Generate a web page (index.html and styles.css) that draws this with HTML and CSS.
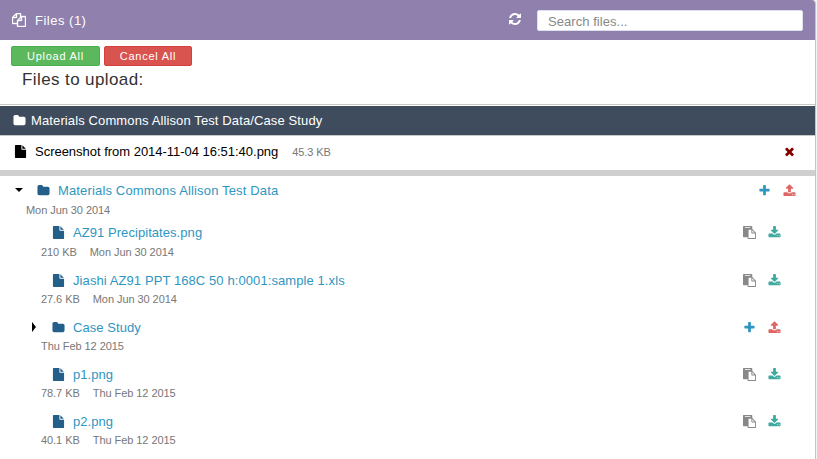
FILE: index.html
```
<!DOCTYPE html>
<html lang="en">
<head>
<meta charset="utf-8">
<title>Files</title>
<link rel="stylesheet" href="styles.css">
</head>
<body>
<svg class="sprite" aria-hidden="true">
<symbol id="folder" viewBox="0 0 1792 1792"><path d="M1728 608v704q0 92-66 158t-158 66h-1216q-92 0-158-66t-66-158v-960q0-92 66-158t158-66h320q92 0 158 66t66 158v32h672q92 0 158 66t66 158z"/></symbol>
<symbol id="file" viewBox="0 0 1792 1792"><path d="M1152 512v-472q22 14 36 28l408 408q14 14 28 36h-472zm-128 32q0 40 28 68t68 28h544v1056q0 40-28 68t-68 28h-1344q-40 0-68-28t-28-68v-1600q0-40 28-68t68-28h800v544z"/></symbol>
<symbol id="plus" viewBox="0 0 1792 1792"><path d="M1600 736v192q0 40-28 68t-68 28h-416v416q0 40-28 68t-68 28h-192q-40 0-68-28t-28-68v-416h-416q-40 0-68-28t-28-68v-192q0-40 28-68t68-28h416v-416q0-40 28-68t68-28h192q40 0 68 28t28 68v416h416q40 0 68 28t28 68z"/></symbol>
<symbol id="times" viewBox="0 0 1792 1792"><path d="M1490 1322q0 40-28 68l-136 136q-28 28-68 28t-68-28l-294-294-294 294q-28 28-68 28t-68-28l-136-136q-28-28-28-68t28-68l294-294-294-294q-28-28-28-68t28-68l136-136q28-28 68-28t68 28l294 294 294-294q28-28 68-28t68 28l136 136q28 28 28 68t-28 68l-294 294 294 294q28 28 28 68z"/></symbol>
<symbol id="upload" viewBox="0 0 1792 1792"><path d="M1344 1472q0-26-19-45t-45-19-45 19-19 45 19 45 45 19 45-19 19-45zm256 0q0-26-19-45t-45-19-45 19-19 45 19 45 45 19 45-19 19-45zm128-224v320q0 40-28 68t-68 28h-1472q-40 0-68-28t-28-68v-320q0-40 28-68t68-28h427q21 56 70.500 92t110.500 36h256q61 0 110.500-36t70.500-92h427q40 0 68 28t28 68zm-325-648q-17 40-59 40h-256v448q0 26-19 45t-45 19h-256q-26 0-45-19t-19-45v-448h-256q-42 0-59-40-17-39 14-69l448-448q18-19 45-19t45 19l448 448q31 30 14 69z"/></symbol>
<symbol id="download" viewBox="0 0 1792 1792"><path d="M1344 1344q0-26-19-45t-45-19-45 19-19 45 19 45 45 19 45-19 19-45zm256 0q0-26-19-45t-45-19-45 19-19 45 19 45 45 19 45-19 19-45zm128-224v320q0 40-28 68t-68 28h-1472q-40 0-68-28t-28-68v-320q0-40 28-68t68-28h465l135 136q58 56 136 56t136-56l136-136h464q40 0 68 28t28 68zm-325-569q17 41-14 70l-448 448q-18 19-45 19t-45-19l-448-448q-31-29-14-70 17-39 59-39h256v-448q0-26 19-45t45-19h256q26 0 45 19t19 45v448h256q42 0 59 39z"/></symbol>
<symbol id="paste" viewBox="0 0 1792 1792"><path d="M768 1664h896v-640h-416q-40 0-68-28t-28-68v-416h-384v1152zm256-1440v-64q0-13-9.500-22.500t-22.500-9.500h-704q-13 0-22.500 9.500t-9.500 22.500v64q0 13 9.500 22.500t22.500 9.500h704q13 0 22.500-9.500t9.500-22.500zm256 672h299l-299-299v299zm512 128v672q0 40-28 68t-68 28h-960q-40 0-68-28t-28-68v-160h-544q-40 0-68-28t-28-68v-1344q0-40 28-68t68-28h1088q40 0 68 28t28 68v328q21 13 36 28l408 408q28 28 48 76t20 88z"/></symbol>
<symbol id="copy" viewBox="0 0 1792 1792"><path d="M1696 384q40 0 68 28t28 68v1216q0 40-28 68t-68 28h-960q-40 0-68-28t-28-68v-288h-544q-40 0-68-28t-28-68v-672q0-40 20-88t48-76l408-408q28-28 76-48t88-20h416q40 0 68 28t28 68v328q68-40 128-40h416zm-544 213l-299 299h299v-299zm-640-384l-299 299h299v-299zm196 647l316-316v-416h-384v416q0 40-28 68t-68 28h-416v640h512v-256q0-40 20-88t48-76zm956 804v-1152h-384v416q0 40-28 68t-68 28h-416v640h896z"/></symbol>
<symbol id="refresh" viewBox="0 0 1792 1792"><path d="M1639 1056q0 5-1 7-64 268-268 434.500t-478 166.500q-146 0-282.500-55t-243.500-157l-129 129q-19 19-45 19t-45-19-19-45v-448q0-26 19-45t45-19h448q26 0 45 19t19 45-19 45l-137 137q71 66 161 102t187 36q134 0 250-65t186-179q11-17 53-117 8-23 30-23h192q13 0 22.500 9.500t9.500 22.500zm25-800v448q0 26-19 45t-45 19h-448q-26 0-45-19t-19-45 19-45l138-138q-148-137-349-137-134 0-250 65t-186 179q-11 17-53 117-8 23-30 23h-199q-13 0-22.500-9.500t-9.500-22.500v-7q65-268 270-434.500t480-166.500q146 0 284 55.500t245 156.500l130-129q19-19 45-19t45 19 19 45z"/></symbol>
</svg>
<main class="panel">
  <header class="panel-head">
    <svg class="icon head-copy"><use href="#copy"/></svg>
    <span class="head-title">Files (1)</span>
    <svg class="icon head-refresh"><use href="#refresh"/></svg>
    <input class="search" type="text" placeholder="Search files...">
  </header>
  <section class="queue">
    <div class="buttons">
      <button class="btn btn-upload">Upload All</button>
      <button class="btn btn-cancel">Cancel All</button>
    </div>
    <h4 class="queue-title">Files to upload:</h4>
  </section>
  <div class="target">
    <svg class="icon"><use href="#folder"/></svg>
    <span class="target-name">Materials Commons Allison Test Data/Case Study</span>
  </div>
  <div class="pending">
    <svg class="icon"><use href="#file"/></svg>
    <span class="pending-name">Screenshot from 2014-11-04 16:51:40.png</span>
    <span class="pending-size">45.3 KB</span>
    <svg class="icon remove"><use href="#times"/></svg>
  </div>
  <section class="tree">
    <div class="node root">
      <div class="line">
        <span class="toggle"><i class="caret-down"></i></span>
        <svg class="icon kind"><use href="#folder"/></svg>
        <a class="name root-name">Materials Commons Allison Test Data</a>
        <span class="actions"><svg class="icon plus"><use href="#plus"/></svg><svg class="icon up"><use href="#upload"/></svg></span>
      </div>
      <div class="meta"><span>Mon Jun 30 2014</span></div>
    </div>
    <div class="children">
      <div class="node first">
        <div class="line">
          <span class="toggle"></span>
          <svg class="icon kind doc"><use href="#file"/></svg>
          <a class="name">AZ91 Precipitates.png</a>
          <span class="actions"><svg class="icon paste"><use href="#paste"/></svg><svg class="icon down"><use href="#download"/></svg></span>
        </div>
        <div class="meta"><span>210 KB</span><span>Mon Jun 30 2014</span></div>
      </div>
      <div class="node">
        <div class="line">
          <span class="toggle"></span>
          <svg class="icon kind doc"><use href="#file"/></svg>
          <a class="name xls-name">Jiashi AZ91 PPT 168C 50 h:0001:sample 1.xls</a>
          <span class="actions"><svg class="icon paste"><use href="#paste"/></svg><svg class="icon down"><use href="#download"/></svg></span>
        </div>
        <div class="meta"><span>27.6 KB</span><span>Mon Jun 30 2014</span></div>
      </div>
      <div class="node">
        <div class="line">
          <span class="toggle"><i class="caret-right"></i></span>
          <svg class="icon kind"><use href="#folder"/></svg>
          <a class="name">Case Study</a>
          <span class="actions"><svg class="icon plus"><use href="#plus"/></svg><svg class="icon up"><use href="#upload"/></svg></span>
        </div>
        <div class="meta"><span>Thu Feb 12 2015</span></div>
      </div>
      <div class="node">
        <div class="line">
          <span class="toggle"></span>
          <svg class="icon kind doc"><use href="#file"/></svg>
          <a class="name">p1.png</a>
          <span class="actions"><svg class="icon paste"><use href="#paste"/></svg><svg class="icon down"><use href="#download"/></svg></span>
        </div>
        <div class="meta"><span>78.7 KB</span><span>Thu Feb 12 2015</span></div>
      </div>
      <div class="node">
        <div class="line">
          <span class="toggle"></span>
          <svg class="icon kind doc"><use href="#file"/></svg>
          <a class="name">p2.png</a>
          <span class="actions"><svg class="icon paste"><use href="#paste"/></svg><svg class="icon down"><use href="#download"/></svg></span>
        </div>
        <div class="meta"><span>40.1 KB</span><span>Thu Feb 12 2015</span></div>
      </div>
    </div>
  </section>
</main>
</body>
</html>
```
FILE: styles.css
```
* { box-sizing: border-box; }
body {
  margin: 0;
  height: 459px;
  overflow: hidden;
  background: #f4f4f4;
  font: 13px/20px "Liberation Sans", Arial, sans-serif;
  letter-spacing: 0.1px;
  color: #333;
}
.sprite { display: none; }
.icon { width: 13px; height: 13px; flex: none; fill: currentColor; display: block; overflow: visible; }
.panel {
  width: 816px;
  height: 459px;
  background: #fff;
  border-right: 1px solid #c4c4c4;
  border-top-right-radius: 4px;
  overflow: hidden;
}
.panel-head {
  height: 40px;
  display: flex;
  align-items: center;
  padding: 0 12px;
  background: #8f80ad;
  color: #fff;
}
.head-copy { width: 14px; height: 14px; stroke: currentColor; stroke-width: 50; }
.head-title { margin: 2px 0 0 9px; letter-spacing: 0.5px; }
.head-refresh { width: 14px; height: 14px; margin: -2px 15px 0 auto; }
.search {
  width: 266px;
  height: 21px;
  margin-top: 1px;
  padding: 1px 10px 0;
  border: 1px solid #dce1ec;
  border-radius: 2px;
  background: #fff;
  font: inherit;
  letter-spacing: 0.05px;
}
.search::placeholder { color: #888; opacity: 1; }
.queue { height: 65px; padding: 6px 11px 0; border-bottom: 1px solid #c8c8c8; }
.buttons { display: flex; gap: 4px; }
.btn {
  height: 20px;
  padding: 0;
  border: 1px solid;
  border-radius: 2px;
  font: 11px/18px "Liberation Sans", Arial, sans-serif;
  letter-spacing: 0.75px;
  color: #fff;
}
.btn-upload { width: 89px; background: #5cb85c; border-color: #4cae4c; }
.btn-cancel { width: 88px; background: #d9534f; border-color: #d43f3a; }
.queue-title { margin: 4px 0 0 11px; font-size: 17px; line-height: 20px; font-weight: 400; letter-spacing: 0.4px; }
.target {
  height: 29px;
  margin-top: 1px;
  padding-left: 13px;
  display: flex;
  align-items: center;
  background: #3f4c5e;
  color: #fff;
}
.target-name { margin-left: 5px; letter-spacing: 0.12px; }
.pending {
  height: 41px;
  padding: 0 19px 4px 14px;
  display: flex;
  align-items: center;
  border-top: 1px solid #c8c8c8;
  border-bottom: 6px solid #cfcfcf;
  color: #000;
}
.pending-name { margin: 2px 0 0 8px; letter-spacing: -0.02px; }
.pending-size { margin: 2px 0 0 14px; font-size: 11px; letter-spacing: -0.1px; color: #777; }
.remove { margin-left: auto; color: #800000; }
.tree { padding: 4px 19px 0 11px; }
.children { padding: 0 15px; }
.node { height: 47px; }
.root { height: 42px; }
.first { height: 48px; }
.line { height: 20px; display: flex; align-items: center; }
.toggle { width: 26px; display: flex; padding-left: 4px; }
.caret-down { border: 4px solid transparent; border-top-color: #000; border-bottom: 0; }
.caret-right { margin-left: 2px; border: 5px solid transparent; border-left: 4px solid #000; border-right: 0; }
.kind { color: #245f8a; }
.name { margin: 2px 0 0 8px; color: #2f96bf; letter-spacing: 0.06px; white-space: nowrap; }
.root-name { letter-spacing: 0.15px; }
.xls-name { letter-spacing: 0.09px; }
.actions { display: flex; gap: 12px; margin-left: auto; }
.meta { display: flex; gap: 13px; padding-left: 15px; font-size: 11px; color: #777; line-height: 20px; letter-spacing: -0.06px; }
.children .node:not(.first) .meta { margin-top: -1px; }
.plus { color: #2f96bf; }
.up { color: #e06666; }
.down { color: #3fa9a0; }
.paste { color: #888; }
```
